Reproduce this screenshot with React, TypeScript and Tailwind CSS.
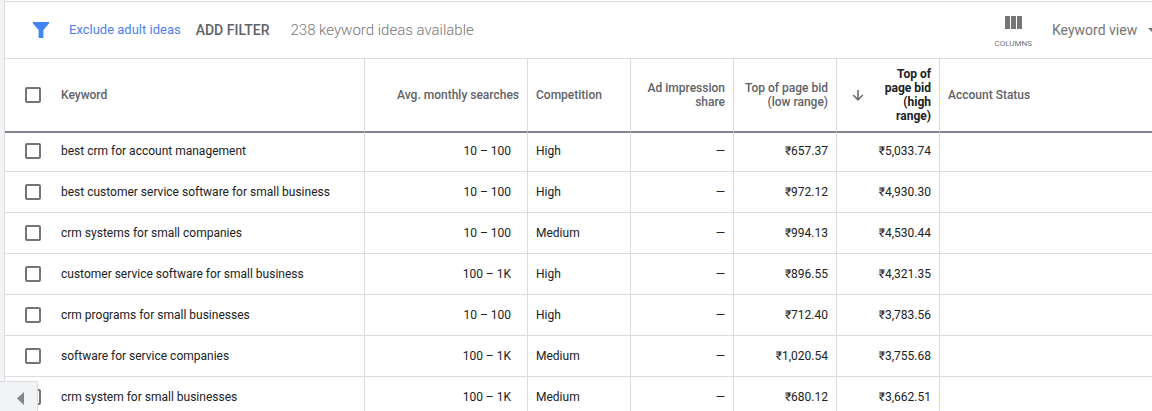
import React from "react";

type Row = {
  keyword: string;
  searches: string;
  competition: string;
  low: string;
  high: string;
};

const rows: Row[] = [
  { keyword: "best crm for account management", searches: "10 – 100", competition: "High", low: "₹657.37", high: "₹5,033.74" },
  { keyword: "best customer service software for small business", searches: "10 – 100", competition: "High", low: "₹972.12", high: "₹4,930.30" },
  { keyword: "crm systems for small companies", searches: "10 – 100", competition: "Medium", low: "₹994.13", high: "₹4,530.44" },
  { keyword: "customer service software for small business", searches: "100 – 1K", competition: "High", low: "₹896.55", high: "₹4,321.35" },
  { keyword: "crm programs for small businesses", searches: "10 – 100", competition: "High", low: "₹712.40", high: "₹3,783.56" },
  { keyword: "software for service companies", searches: "100 – 1K", competition: "Medium", low: "₹1,020.54", high: "₹3,755.68" },
  { keyword: "crm system for small businesses", searches: "100 – 1K", competition: "Medium", low: "₹680.12", high: "₹3,662.51" },
];

function Checkbox({ label }: { label: string }) {
  return (
    <input
      type="checkbox"
      aria-label={label}
      className="block size-4 shrink-0 appearance-none rounded-xs border-2 border-[#757575] bg-white checked:bg-[#4285f4]"
    />
  );
}

function Toolbar() {
  return (
    <header className="flex h-[58px] items-center overflow-hidden border-y border-[#dadce0] text-[#757575]">
      <button type="button" aria-label="Filter" className="ml-7 shrink-0">
        <svg viewBox="0 0 16 16" className="size-4" fill="#4285f4">
          <path d="M0 0h16v1.5L10.4 8v8H5.6V8L0 1.5z" />
        </svg>
      </button>
      <a href="#exclude" className="ml-5 whitespace-nowrap text-[13px] text-[#4d7fee]">
        Exclude adult ideas
      </a>
      <button type="button" className="ml-[15px] whitespace-nowrap text-sm font-medium text-[#5f6368]">
        ADD FILTER
      </button>
      <span className="ml-[21px] whitespace-nowrap text-[15px] font-light">238 keyword ideas available</span>
      <button type="button" className="ml-auto flex shrink-0 flex-col items-center gap-2.5 pt-1">
        <svg viewBox="0 0 17 13" className="h-[13px] w-[17px]" fill="#757575">
          <path d="M0 0h5v13H0zM6 0h5v13H6zM12 0h5v13h-5z" />
        </svg>
        <span className="text-[8px] leading-[10px]">COLUMNS</span>
      </button>
      <div className="-mr-1.5 ml-5 flex shrink-0 items-center">
        <select
          aria-label="View"
          className="w-24 appearance-none bg-transparent text-sm"
          defaultValue="keyword"
        >
          <option value="keyword">Keyword view</option>
          <option value="grouped">Grouped view</option>
        </select>
        <svg viewBox="0 0 10 5" className="h-[5px] w-[10px]" fill="#757575">
          <path d="M0 0h10L5 5z" />
        </svg>
      </div>
    </header>
  );
}

const head = "border-b-2 border-r border-b-[#80868b] border-r-[#dadce0] px-2 font-medium leading-[14px]";
const cell = "border-b border-r border-[#dadce0] px-2";

export default function App() {
  return (
    <div className="relative flex h-screen overflow-hidden bg-[#f1f3f4] pl-1 font-['Roboto',sans-serif]">
      <main className="min-w-0 flex-1 border-l border-[#dadce0] bg-white pt-px">
        <Toolbar />
        <table className="w-full table-fixed border-separate border-spacing-0 text-xs text-[#202124]">
          <colgroup>
            <col className="w-[360px]" />
            <col className="w-[163px]" />
            <col className="w-[103px]" />
            <col className="w-[103px]" />
            <col className="w-[103px]" />
            <col className="w-[103px]" />
            <col />
          </colgroup>
          <thead className="text-[#5f6368]">
            <tr className="h-[74px]">
              <th className={`${head} text-left`}>
                <div className="flex items-center gap-5 pl-3">
                  <Checkbox label="Select all keywords" />
                  Keyword
                </div>
              </th>
              <th className={`${head} text-right`}>Avg. monthly searches</th>
              <th className={`${head} text-left`}>Competition</th>
              <th className={`${head} text-right`}>Ad impression share</th>
              <th className={`${head} text-right`}>Top of page bid (low range)</th>
              <th className={`${head} text-right`} aria-sort="descending">
                <div className="flex items-center justify-between pl-[7px]">
                  <svg viewBox="0 0 12 12" className="size-3 shrink-0" fill="none" stroke="#6b6b6b" strokeWidth="1.6">
                    <path d="M6 1v9.6M1.2 6l4.8 4.8L10.8 6" />
                  </svg>
                  <span className="w-12 font-bold text-[#202124]">Top of page bid (high range)</span>
                </div>
              </th>
              <th className="border-b-2 border-[#80868b] px-2 text-left font-medium">Account Status</th>
            </tr>
          </thead>
          <tbody>
            {rows.map((row) => (
              <tr key={row.keyword} className="h-[41px] first:h-[39px] first:[&>td]:pb-0.5">
                <td className={cell}>
                  <div className="flex items-center gap-5 pl-3">
                    <Checkbox label={`Select ${row.keyword}`} />
                    {row.keyword}
                  </div>
                </td>
                <td className={`${cell} pr-4 text-right`}>{row.searches}</td>
                <td className={cell}>{row.competition}</td>
                <td className={`${cell} text-right`}>—</td>
                <td className={`${cell} text-right`}>{row.low}</td>
                <td className={`${cell} text-right`}>{row.high}</td>
                <td className="border-b border-[#dadce0]" />
              </tr>
            ))}
          </tbody>
        </table>
      </main>
      <button
        type="button"
        aria-label="Expand navigation"
        className="absolute bottom-0 left-0 flex h-[30px] w-[38px] items-center justify-end border-r border-t border-[#dadce0] bg-[#f1f3f4] pr-[13px] pt-1"
      >
        <svg viewBox="0 0 7 13" className="h-[13px] w-[7px]" fill="#80868b">
          <path d="M7 0v13L0 6.5z" />
        </svg>
      </button>
    </div>
  );
}
